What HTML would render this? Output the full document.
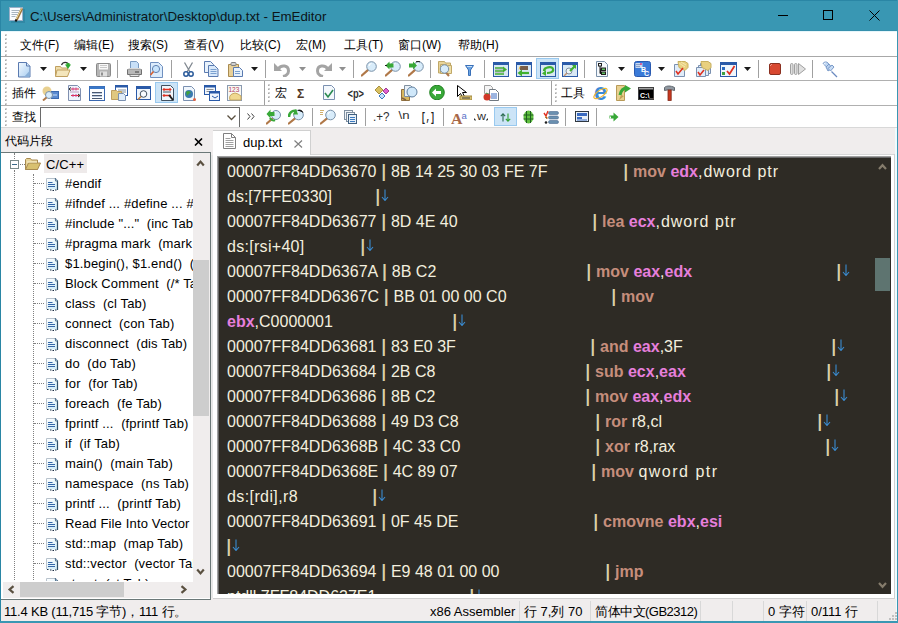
<!DOCTYPE html><html><head><meta charset="utf-8"><style>
*{box-sizing:border-box}
body{margin:0;width:898px;height:623px;overflow:hidden;position:relative;background:#f0eded;font-family:"Liberation Sans",sans-serif;font-size:12px;color:#000}
.a{position:absolute}
.t{position:absolute;white-space:pre;line-height:1}
.ed{position:absolute;white-space:pre;font-size:16px;line-height:16px;color:#f3efdf}
.k{color:#c68e7c;font-weight:bold}
.r{color:#e67fdc;font-weight:bold}
.p{color:#d8d0aa;display:inline-block;transform:scaleY(1.13);transform-origin:50% 75%;font-weight:bold;width:5.6px;text-align:center}
.ar{color:#3d8fd0}
</style></head><body>
<div class="a" style="left:0px;top:0px;width:898px;height:31px;background:#3997b3;"></div>
<div class="a" style="left:0px;top:0px;width:898px;height:1px;background:#2a86a5;"></div>
<div class="a" style="left:0px;top:30px;width:898px;height:1px;background:#3690ad;"></div>
<div class="a" style="left:0px;top:0px;width:1px;height:623px;background:#2a86a5;"></div>
<div class="a" style="left:897px;top:0px;width:1px;height:623px;background:#3997b3;"></div>
<div class="a" style="left:0px;top:621px;width:898px;height:2px;background:#3997b3;"></div>
<svg class="a" style="left:9px;top:7px" width="18" height="18" viewBox="0 0 18 18"><rect x="2" y="2" width="14" height="14" fill="#2a7a98" opacity="0.5"/><rect x="0.5" y="0.5" width="13" height="13" fill="#f8fbff" stroke="#9ab0c8"/><path d="M2.5 3.5h8M2.5 5.5h7M2.5 7.5h6M2.5 9.5h4" stroke="#a8b4c0"/><path d="M13 1.5L7.5 13" stroke="#a07840" stroke-width="2.6"/><path d="M12.5 1.5L7 12.5" stroke="#f0e0a0" stroke-width="0.9"/><path d="M7.5 12.5L6.5 14.5" stroke="#101010" stroke-width="2"/></svg>
<div class="t" style="left:30px;top:10px;font-size:13.3px;color:#0c1418">C:\Users\Administrator\Desktop\dup.txt - EmEditor</div>
<div class="a" style="left:778px;top:15px;width:10px;height:1px;background:#000;"></div>
<div class="a" style="left:823px;top:10px;width:10px;height:10px;border:1px solid #000"></div>
<svg class="a" style="left:869px;top:10px" width="11" height="11" viewBox="0 0 11 11"><path d="M0.5 0.5L10.5 10.5M10.5 0.5L0.5 10.5" stroke="#000" stroke-width="1"/></svg>
<div class="a" style="left:1px;top:31px;width:896px;height:25px;background:#fff;"></div>
<div class="a" style="left:1px;top:31px;width:896px;height:1px;background:#e6f6fb;"></div>
<div class="a" style="left:1px;top:56px;width:896px;height:1px;background:#a8a8a8;"></div>
<div class="a" style="left:1px;top:57px;width:896px;height:23px;background:#fff;"></div>
<div class="a" style="left:1px;top:80px;width:896px;height:1px;background:#b0b0b0;"></div>
<div class="a" style="left:1px;top:81px;width:896px;height:24px;background:#fff;"></div>
<div class="a" style="left:1px;top:105px;width:896px;height:1px;background:#b0b0b0;"></div>
<div class="a" style="left:1px;top:106px;width:896px;height:21px;background:#fff;"></div>
<div class="a" style="left:1px;top:127px;width:896px;height:1px;background:#d8d8d8;"></div>
<div class="a" style="left:5px;top:34px;width:2px;height:2px;background:#d0d0d0;"></div>
<div class="a" style="left:5px;top:35px;width:1px;height:1px;background:#a8a8a8;"></div>
<div class="a" style="left:5px;top:38px;width:2px;height:2px;background:#d0d0d0;"></div>
<div class="a" style="left:5px;top:39px;width:1px;height:1px;background:#a8a8a8;"></div>
<div class="a" style="left:5px;top:42px;width:2px;height:2px;background:#d0d0d0;"></div>
<div class="a" style="left:5px;top:43px;width:1px;height:1px;background:#a8a8a8;"></div>
<div class="a" style="left:5px;top:46px;width:2px;height:2px;background:#d0d0d0;"></div>
<div class="a" style="left:5px;top:47px;width:1px;height:1px;background:#a8a8a8;"></div>
<div class="a" style="left:5px;top:50px;width:2px;height:2px;background:#d0d0d0;"></div>
<div class="a" style="left:5px;top:51px;width:1px;height:1px;background:#a8a8a8;"></div>
<div class="a" style="left:5px;top:54px;width:2px;height:2px;background:#d0d0d0;"></div>
<div class="a" style="left:5px;top:55px;width:1px;height:1px;background:#a8a8a8;"></div>
<div class="a" style="left:5px;top:59px;width:2px;height:2px;background:#d0d0d0;"></div>
<div class="a" style="left:5px;top:60px;width:1px;height:1px;background:#a8a8a8;"></div>
<div class="a" style="left:5px;top:63px;width:2px;height:2px;background:#d0d0d0;"></div>
<div class="a" style="left:5px;top:64px;width:1px;height:1px;background:#a8a8a8;"></div>
<div class="a" style="left:5px;top:67px;width:2px;height:2px;background:#d0d0d0;"></div>
<div class="a" style="left:5px;top:68px;width:1px;height:1px;background:#a8a8a8;"></div>
<div class="a" style="left:5px;top:71px;width:2px;height:2px;background:#d0d0d0;"></div>
<div class="a" style="left:5px;top:72px;width:1px;height:1px;background:#a8a8a8;"></div>
<div class="a" style="left:5px;top:75px;width:2px;height:2px;background:#d0d0d0;"></div>
<div class="a" style="left:5px;top:76px;width:1px;height:1px;background:#a8a8a8;"></div>
<div class="a" style="left:5px;top:83px;width:2px;height:2px;background:#d0d0d0;"></div>
<div class="a" style="left:5px;top:84px;width:1px;height:1px;background:#a8a8a8;"></div>
<div class="a" style="left:5px;top:87px;width:2px;height:2px;background:#d0d0d0;"></div>
<div class="a" style="left:5px;top:88px;width:1px;height:1px;background:#a8a8a8;"></div>
<div class="a" style="left:5px;top:91px;width:2px;height:2px;background:#d0d0d0;"></div>
<div class="a" style="left:5px;top:92px;width:1px;height:1px;background:#a8a8a8;"></div>
<div class="a" style="left:5px;top:95px;width:2px;height:2px;background:#d0d0d0;"></div>
<div class="a" style="left:5px;top:96px;width:1px;height:1px;background:#a8a8a8;"></div>
<div class="a" style="left:5px;top:99px;width:2px;height:2px;background:#d0d0d0;"></div>
<div class="a" style="left:5px;top:100px;width:1px;height:1px;background:#a8a8a8;"></div>
<div class="a" style="left:5px;top:103px;width:2px;height:2px;background:#d0d0d0;"></div>
<div class="a" style="left:5px;top:104px;width:1px;height:1px;background:#a8a8a8;"></div>
<div class="a" style="left:5px;top:108px;width:2px;height:2px;background:#d0d0d0;"></div>
<div class="a" style="left:5px;top:109px;width:1px;height:1px;background:#a8a8a8;"></div>
<div class="a" style="left:5px;top:112px;width:2px;height:2px;background:#d0d0d0;"></div>
<div class="a" style="left:5px;top:113px;width:1px;height:1px;background:#a8a8a8;"></div>
<div class="a" style="left:5px;top:116px;width:2px;height:2px;background:#d0d0d0;"></div>
<div class="a" style="left:5px;top:117px;width:1px;height:1px;background:#a8a8a8;"></div>
<div class="a" style="left:5px;top:120px;width:2px;height:2px;background:#d0d0d0;"></div>
<div class="a" style="left:5px;top:121px;width:1px;height:1px;background:#a8a8a8;"></div>
<div class="a" style="left:5px;top:124px;width:2px;height:2px;background:#d0d0d0;"></div>
<div class="a" style="left:5px;top:125px;width:1px;height:1px;background:#a8a8a8;"></div>
<div class="t" style="left:20px;top:39px;">文件(F)</div>
<div class="t" style="left:74px;top:39px;">编辑(E)</div>
<div class="t" style="left:128px;top:39px;">搜索(S)</div>
<div class="t" style="left:184px;top:39px;">查看(V)</div>
<div class="t" style="left:240px;top:39px;">比较(C)</div>
<div class="t" style="left:296px;top:39px;">宏(M)</div>
<div class="t" style="left:344px;top:39px;">工具(T)</div>
<div class="t" style="left:398px;top:39px;">窗口(W)</div>
<div class="t" style="left:458px;top:39px;">帮助(H)</div>
<svg class="a" style="left:18px;top:62px" width="13" height="16" viewBox="0 0 13 16"><defs><linearGradient id="gnew" x1="0" y1="0" x2="1" y2="1"><stop offset="0" stop-color="#f4faff"/><stop offset="1" stop-color="#a8cdf0"/></linearGradient></defs><path d="M0.5 0.5h8l3.5 3.5v11h-11.5z" fill="url(#gnew)" stroke="#5a7ab0"/><path d="M8.5 0.5v3.5h3.5" fill="#d8e8f8" stroke="#5a7ab0"/><path d="M11.5 9L6 15h5.5z" fill="#8ab0d8"/></svg>
<svg class="a" style="left:55px;top:61px" width="16" height="16" viewBox="0 0 16 16"><path d="M0.5 5.5h5l1 1.5h6v8h-12z" fill="#eedcaa" stroke="#c0a060"/><path d="M2 9h13l-2.5 6.5h-12z" fill="#f4e6bc" stroke="#c0a060"/><path d="M6.5 4c1.5-3.5 6-3.5 7.5 0" stroke="#303030" stroke-width="1.2" fill="none"/><path d="M10 3.5h6l-3 4.5z" fill="#30a830"/><path d="M11.5 2v3h3v-3z" fill="#30a830"/></svg>
<svg class="a" style="left:96px;top:63px" width="15" height="14" viewBox="0 0 15 14"><rect x="0.5" y="0.5" width="14" height="13" rx="1" fill="#b4b4b4" stroke="#8a8a8a"/><rect x="3" y="1" width="9" height="5.5" fill="#f8f8f8"/><path d="M4 2.5h7M4 4.5h7" stroke="#c8c8c8"/><rect x="4" y="8.5" width="7" height="5" fill="#e0e0e0"/><rect x="5" y="9.5" width="2" height="3" fill="#909090"/></svg>
<svg class="a" style="left:127px;top:61px" width="15" height="16" viewBox="0 0 15 16"><path d="M3.5 0.5h6l2 2v6h-8z" fill="#c8e0f8" stroke="#7a9ac0"/><path d="M0.5 8.5h14v5h-14z" fill="#b8b8b8" stroke="#707070"/><path d="M2 7h11l1.5 1.5h-14z" fill="#d8d8d8"/><path d="M3 13.5h9v2h-9z" fill="#e8e8e8" stroke="#808080"/><path d="M8 11h4" stroke="#404040"/></svg>
<svg class="a" style="left:150px;top:62px" width="13" height="16" viewBox="0 0 13 16"><path d="M0.5 0.5h8l4 4v11h-12z" fill="#dcecfc" stroke="#7090c0"/><circle cx="6" cy="7" r="3.6" fill="#c8e4fc" stroke="#6080b0"/><path d="M3.5 9.5L0.5 13" stroke="#d86030" stroke-width="1.6"/></svg>
<svg class="a" style="left:183px;top:62px" width="11" height="15" viewBox="0 0 11 15"><path d="M1.5 0.5L7 10M9.5 0.5L4 10" stroke="#808890" stroke-width="1.3"/><circle cx="3" cy="12" r="2.2" fill="none" stroke="#2a5a9a" stroke-width="1.5"/><circle cx="8" cy="12" r="2.2" fill="none" stroke="#2a5a9a" stroke-width="1.5"/></svg>
<svg class="a" style="left:204px;top:61px" width="15" height="16" viewBox="0 0 15 16"><path d="M0.5 0.5h6l3 3v8h-9z" fill="#e8f2fc" stroke="#5a7ab0"/><path d="M4.5 4.5h6l3.5 3.5v7.5h-9.5z" fill="#d8e8fa" stroke="#5a7ab0"/><path d="M6.5 8.5h6M6.5 10.5h6M6.5 12.5h6" stroke="#7aa0d0"/></svg>
<svg class="a" style="left:228px;top:62px" width="15" height="15" viewBox="0 0 15 15"><path d="M0.5 2.5h10v12h-10z" fill="#e8d098" stroke="#a88a50"/><rect x="3" y="0.5" width="5" height="3" rx="1" fill="#d0d0d0" stroke="#808080"/><path d="M5.5 5.5h6l3 3v6h-9z" fill="#e8f2fc" stroke="#5a7ab0"/><path d="M7 9.5h5M7 11.5h5" stroke="#7aa0d0"/></svg>
<svg class="a" style="left:274px;top:62px" width="16" height="15" viewBox="0 0 16 15"><path d="M4.5 6.5c3-4 10-3.5 10 2.5c0 3-3 5-5.5 5.5" stroke="#a4a4a4" stroke-width="3" fill="none"/><path d="M0 1v8h8z" fill="#a4a4a4"/></svg>
<svg class="a" style="left:316px;top:62px" width="16" height="15" viewBox="0 0 16 15"><path d="M11.5 6.5c-3-4-10-3.5-10 2.5c0 3 3 5 5.5 5.5" stroke="#a4a4a4" stroke-width="3" fill="none"/><path d="M16 1v8h-8z" fill="#a4a4a4"/></svg>
<svg class="a" style="left:361px;top:61px" width="16" height="16" viewBox="0 0 16 16"><path d="M7.1 8.9L0.8 14.5" stroke="#b07848" stroke-width="2.2" stroke-linecap="round"/><circle cx="10.5" cy="5.5" r="4.8" fill="#d8ecfa" stroke="#7890a8" stroke-width="1"/><path d="M8.0 5.0a2.8 2.8 0 0 1 2.5 -2.5" stroke="#fff" stroke-width="1.2" fill="none"/></svg>
<svg class="a" style="left:385px;top:61px" width="16" height="16" viewBox="0 0 16 16"><path d="M7.1 8.9L0.8 14.5" stroke="#b07848" stroke-width="2.2" stroke-linecap="round"/><circle cx="10.5" cy="5.5" r="4.8" fill="#d8ecfa" stroke="#7890a8" stroke-width="1"/><path d="M8.0 5.0a2.8 2.8 0 0 1 2.5 -2.5" stroke="#fff" stroke-width="1.2" fill="none"/><path d="M0.5 4.5L4.5 0.5v2h4v4h-4v2z" fill="#38a838"/><path d="M0 4.5h2" stroke="#202020"/></svg>
<svg class="a" style="left:408px;top:61px" width="16" height="16" viewBox="0 0 16 16"><path d="M7.1 8.9L0.8 14.5" stroke="#b07848" stroke-width="2.2" stroke-linecap="round"/><circle cx="10.5" cy="5.5" r="4.8" fill="#d8ecfa" stroke="#7890a8" stroke-width="1"/><path d="M8.0 5.0a2.8 2.8 0 0 1 2.5 -2.5" stroke="#fff" stroke-width="1.2" fill="none"/><path d="M9 4.5L5 0.5v2h-4v4h4v2z" fill="#38a838"/><path d="M8 1c1-1 3-1 4 0" stroke="#202020"/></svg>
<svg class="a" style="left:438px;top:61px" width="17" height="16" viewBox="0 0 17 16"><path d="M0.5 0.5h6l1 1.5h5v10h-12z" fill="#e8d49a" stroke="#c0a868"/><path d="M2.5 3.5h6l1 1h4v8h-11z" fill="#f0e0a8" stroke="#c0a868"/><path d="M7.5 11L11 15" stroke="#b07848" stroke-width="2"/><circle cx="6.5" cy="8" r="4.2" fill="#d8ecfa" stroke="#7890a8"/></svg>
<svg class="a" style="left:465px;top:65px" width="9" height="11" viewBox="0 0 9 11"><path d="M0.5 0.5h8l-3 4.5v5.5h-2v-5.5z" fill="#6aa4e4" stroke="#3a70b8"/><path d="M2 1.5h5" stroke="#c8e0f8"/></svg>
<svg class="a" style="left:493px;top:62px" width="16" height="15" viewBox="0 0 16 15"><rect x="0.5" y="0.5" width="15" height="14" fill="#d8e8f4" stroke="#2a5aa8"/><rect x="0.5" y="0.5" width="15" height="2.5" fill="#2a5aa8"/><path d="M2 6h9M2 9h9M2 12h9" stroke="#40b030" stroke-width="1.6"/><path d="M10 4.5l4 3l-4 3z" fill="#40b030"/><path d="M2 7.2h9M2 10.2h9" stroke="#909090" stroke-width="0.6"/></svg>
<svg class="a" style="left:516px;top:62px" width="16" height="15" viewBox="0 0 16 15"><rect x="0.5" y="0.5" width="15" height="14" fill="#d8e8f4" stroke="#2a5aa8"/><rect x="0.5" y="0.5" width="15" height="2.5" fill="#2a5aa8"/><path d="M4 5h8M4 7h8" stroke="#5a3010" stroke-width="1.4"/><path d="M13 11H5" stroke="#40b030" stroke-width="2.2"/><path d="M1.5 11l4.5-3.5v7z" fill="#40b030"/><path d="M4 4.5l-1 3" stroke="#f0c040"/></svg>
<svg class="a" style="left:540px;top:62px" width="16" height="15" viewBox="0 0 16 15"><rect x="0.5" y="0.5" width="15" height="14" fill="#d8e8f4" stroke="#2a5aa8"/><rect x="0.5" y="0.5" width="15" height="2.5" fill="#2a5aa8"/><path d="M4 9c0-4 8-5 9-2c1 3-3 4-6 4" stroke="#40b030" stroke-width="2.2" fill="none"/><path d="M2 11.5l4-3.5v6z" fill="#40b030"/></svg>
<svg class="a" style="left:562px;top:62px" width="16" height="15" viewBox="0 0 16 15"><rect x="0.5" y="0.5" width="15" height="14" fill="#d8e8f4" stroke="#2a5aa8"/><rect x="0.5" y="0.5" width="15" height="2.5" fill="#2a5aa8"/><circle cx="7" cy="9" r="3" fill="#f0f4f8" stroke="#8090a0"/><path d="M5 11l-3 3" stroke="#c09070" stroke-width="1.4"/><path d="M8 9l5-5" stroke="#40b030" stroke-width="2.2"/><path d="M10 3h4v4z" fill="#40b030"/></svg>
<svg class="a" style="left:596px;top:61px" width="12" height="16" viewBox="0 0 12 16"><path d="M0.5 0.5h8l3 3v12h-11z" fill="#f4f8fc" stroke="#7a90a8"/><rect x="2.5" y="2.5" width="3" height="2.5" fill="none" stroke="#202020"/><rect x="5.5" y="7" width="4" height="2.5" fill="#60c060" stroke="#202020"/><rect x="5.5" y="11" width="4" height="2.5" fill="#60c060" stroke="#202020"/><path d="M4 5v7.5h1.5M4 8.2h1.5" stroke="#202020"/></svg>
<svg class="a" style="left:634px;top:61px" width="17" height="16" viewBox="0 0 17 16"><rect x="0.5" y="0.5" width="16" height="15" rx="2" fill="#3a7ad8" stroke="#2a5ab0"/><rect x="1.5" y="2" width="7" height="5" fill="#c8d8f0"/><path d="M2 3.5h5M2 5.5h4" stroke="#8aa0c8"/><text x="7" y="11" font-size="7" font-family="Liberation Sans" fill="#fff" font-weight="bold">B</text><text x="10" y="15" font-size="7" font-family="Liberation Sans" fill="#fff" font-weight="bold">C</text><circle cx="7" cy="3" r="1" fill="#e04080"/></svg>
<svg class="a" style="left:674px;top:61px" width="15" height="16" viewBox="0 0 15 16"><path d="M0.5 3.5h10v12h-10z" fill="#e0ecf8" stroke="#7a90b0"/><path d="M4 0.5l7 0l3 2v4l-3 3l-6-3z" fill="#e8d080" stroke="#c8b060"/><path d="M5 2l6 4M7 1l5 3" stroke="#f4e8b0"/><path d="M2 10l2 3l5-6" stroke="#e03020" stroke-width="1.6" fill="none"/></svg>
<svg class="a" style="left:696px;top:61px" width="16" height="16" viewBox="0 0 16 16"><path d="M4.5 2.5h10v10h-10z" fill="#e0ecf8" stroke="#7a90b0"/><path d="M2.5 4.5h10v10h-10z" fill="#e0ecf8" stroke="#7a90b0"/><path d="M0.5 6.5h9v9h-9z" fill="#e0ecf8" stroke="#7a90b0"/><path d="M5 0.5l7 0l3 2v4l-3 3l-6-3z" fill="#e8d080" stroke="#c8b060"/><path d="M2 11l2 3l4-5" stroke="#e03020" stroke-width="1.6" fill="none"/></svg>
<svg class="a" style="left:720px;top:62px" width="17" height="15" viewBox="0 0 17 15"><rect x="0.5" y="0.5" width="16" height="14" fill="#f0f6fc" stroke="#2a5aa8"/><rect x="0.5" y="0.5" width="16" height="2.5" fill="#2a5aa8"/><rect x="2" y="5" width="3" height="3" fill="#2a6ac0"/><rect x="2" y="10" width="3" height="3" fill="#40a040"/><path d="M7 9l2.5 3l5-8" stroke="#e03020" stroke-width="1.7" fill="none"/></svg>
<svg class="a" style="left:769px;top:63px" width="12" height="12" viewBox="0 0 12 12"><rect x="0.5" y="0.5" width="11" height="11" rx="1.5" fill="#d84830" stroke="#8a3020"/><path d="M1 3L3 1" stroke="#f0a090"/></svg>
<svg class="a" style="left:790px;top:63px" width="16" height="12" viewBox="0 0 16 12"><rect x="0.5" y="0.5" width="2.5" height="11" rx="1.2" fill="#e0e0e0" stroke="#a0a0a0"/><rect x="4.5" y="0.5" width="2.5" height="11" rx="1.2" fill="#e0e0e0" stroke="#a0a0a0"/><path d="M8.5 0.5l7 5.5l-7 5.5z" fill="#e0e0e0" stroke="#a0a0a0"/></svg>
<svg class="a" style="left:821px;top:61px" width="17" height="17" viewBox="0 0 17 17"><path d="M10.5 10.5L16 16" stroke="#6a8ac0" stroke-width="1.3"/><path d="M2 2.5c1.5-2 3.5-2 5-0.5s1.5 3.5 -0.5 5z" fill="#c0d8f4" stroke="#7a9ac8"/><path d="M5 6l3-3l3 4l-4 3z" fill="#b8d0f0" stroke="#7a9ac8"/><path d="M7 7.5l4-3.5l2 2l-3.5 4z" fill="#c8dcf4" stroke="#7a9ac8"/><path d="M2.5 3.5l2-1.5" stroke="#fff"/></svg>
<div class="a" style="left:536px;top:58px;width:23px;height:21px;background:#cce4f7;border:1px solid #99c9ef"></div>
<svg class="a" style="left:540px;top:62px" width="16" height="15" viewBox="0 0 16 15"><rect x="0.5" y="0.5" width="15" height="14" fill="#d8e8f4" stroke="#2a5aa8"/><rect x="0.5" y="0.5" width="15" height="2.5" fill="#2a5aa8"/><path d="M4 9c0-4 8-5 9-2c1 3-3 4-6 4" stroke="#40b030" stroke-width="2.2" fill="none"/><path d="M2 11.5l4-3.5v6z" fill="#40b030"/></svg>
<svg class="a" style="left:40px;top:67px" width="8" height="4" viewBox="0 0 8 4"><path d="M0 0h7l-3.5 4z" fill="#1a1a1a"/></svg>
<svg class="a" style="left:80px;top:67px" width="8" height="4" viewBox="0 0 8 4"><path d="M0 0h7l-3.5 4z" fill="#1a1a1a"/></svg>
<svg class="a" style="left:251px;top:67px" width="8" height="4" viewBox="0 0 8 4"><path d="M0 0h7l-3.5 4z" fill="#1a1a1a"/></svg>
<svg class="a" style="left:299px;top:67px" width="8" height="4" viewBox="0 0 8 4"><path d="M0 0h7l-3.5 4z" fill="#909090"/></svg>
<svg class="a" style="left:339px;top:67px" width="8" height="4" viewBox="0 0 8 4"><path d="M0 0h7l-3.5 4z" fill="#909090"/></svg>
<svg class="a" style="left:618px;top:67px" width="8" height="4" viewBox="0 0 8 4"><path d="M0 0h7l-3.5 4z" fill="#1a1a1a"/></svg>
<svg class="a" style="left:658px;top:67px" width="8" height="4" viewBox="0 0 8 4"><path d="M0 0h7l-3.5 4z" fill="#1a1a1a"/></svg>
<svg class="a" style="left:744px;top:67px" width="8" height="4" viewBox="0 0 8 4"><path d="M0 0h7l-3.5 4z" fill="#1a1a1a"/></svg>
<div class="a" style="left:117px;top:60px;width:1px;height:18px;background:#a0a0a0;"></div>
<div class="a" style="left:171px;top:60px;width:1px;height:18px;background:#a0a0a0;"></div>
<div class="a" style="left:265px;top:60px;width:1px;height:18px;background:#a0a0a0;"></div>
<div class="a" style="left:353px;top:60px;width:1px;height:18px;background:#a0a0a0;"></div>
<div class="a" style="left:430px;top:60px;width:1px;height:18px;background:#a0a0a0;"></div>
<div class="a" style="left:484px;top:60px;width:1px;height:18px;background:#a0a0a0;"></div>
<div class="a" style="left:584px;top:60px;width:1px;height:18px;background:#a0a0a0;"></div>
<div class="a" style="left:758px;top:60px;width:1px;height:18px;background:#a0a0a0;"></div>
<div class="a" style="left:812px;top:60px;width:1px;height:18px;background:#a0a0a0;"></div>
<div class="t" style="left:12px;top:87px;">插件</div>
<div class="a" style="left:155px;top:82px;width:23px;height:21px;background:#cce4f7;border:1px solid #99c9ef"></div>
<svg class="a" style="left:42px;top:86px" width="17" height="15" viewBox="0 0 17 15"><circle cx="5" cy="5" r="4.5" fill="#e8d090"/><rect x="9.5" y="5.5" width="7" height="7" fill="#5a8ad0" stroke="#3a6ab0"/><path d="M11 9h4" stroke="#c8e0f8"/><circle cx="7" cy="9" r="3.5" fill="#d8ecfa" stroke="#7890a8"/><path d="M4.5 11.5L1 14.5" stroke="#b07848" stroke-width="2"/></svg>
<svg class="a" style="left:68px;top:85px" width="13" height="16" viewBox="0 0 13 16"><path d="M0.5 0.5h9l3 3v12h-12z" fill="#eef4fc" stroke="#8090b0"/><path d="M3 4h8M3 10.5h8" stroke="#e03040" stroke-width="1"/><path d="M5 2.5v3M8 2.5v3M5 9v3M8 9v3" stroke="#d040a0" stroke-width="1"/><path d="M3 2.5L1 4l2 1.5" stroke="#202020" fill="none"/><path d="M10 9l2 1.5l-2 1.5" stroke="#202020" fill="none"/><path d="M2 7h9" stroke="#c0a0c0"/></svg>
<svg class="a" style="left:89px;top:86px" width="16" height="15" viewBox="0 0 16 15"><rect x="0.5" y="0.5" width="15" height="14" fill="#fcfdff" stroke="#3a68b0"/><rect x="0.5" y="0.5" width="15" height="2.5" fill="#3a78c8"/><path d="M3 6.5h10M3 9.5h10M3 12.5h10" stroke="#4a5870" stroke-width="1"/><path d="M3 7.5h10M3 10.5h10" stroke="#b8c8e0" stroke-width="1"/></svg>
<svg class="a" style="left:111px;top:85px" width="17" height="16" viewBox="0 0 17 16"><rect x="4.5" y="0.5" width="12" height="10" fill="#fff" stroke="#2a5aa8"/><rect x="4.5" y="0.5" width="12" height="2" fill="#2a5aa8"/><path d="M7 5h8M7 7h8" stroke="#8090a0"/><path d="M0.5 5.5h5l1 1h4v8h-10z" fill="#e0c880" stroke="#c0a060"/><path d="M7.5 8.5h5l2 2v5h-7z" fill="#e0ecf8" stroke="#7a90b0"/></svg>
<svg class="a" style="left:136px;top:86px" width="15" height="14" viewBox="0 0 15 14"><rect x="0.5" y="0.5" width="14" height="13" fill="#f0f6fc" stroke="#2a5aa8"/><rect x="0.5" y="0.5" width="14" height="2.5" fill="#2a5aa8"/><circle cx="7.5" cy="8" r="3.3" fill="#f8fcff" stroke="#405060"/><path d="M5 10.5L2 13.5" stroke="#c08040" stroke-width="1.6"/></svg>
<svg class="a" style="left:161px;top:85px" width="13" height="16" viewBox="0 0 13 16"><path d="M0.5 0.5h9l3 3v12h-12z" fill="#f0f6fc" stroke="#405060"/><path d="M2 4.5h8M2 10.5h8" stroke="#e03020" stroke-width="1.3"/><path d="M3.5 3l-1.5 1.5l1.5 1.5M8.5 3l1.5 1.5l-1.5 1.5M3.5 9l-1.5 1.5l1.5 1.5" stroke="#e03020" fill="none"/><path d="M2 7h8" stroke="#405060"/><path d="M8 10l4 5" stroke="#202020" stroke-width="2"/></svg>
<svg class="a" style="left:183px;top:86px" width="14" height="15" viewBox="0 0 14 15"><path d="M0.5 0.5h8l3 3v11h-11z" fill="#f0f6fc" stroke="#7a90b0"/><circle cx="6" cy="8" r="4" fill="#3a7ab0"/><path d="M3 6c2-2 4-1 5 1c-2 0-3 2-4 3z" fill="#40a040"/><circle cx="11.5" cy="13.5" r="1.5" fill="#e06040"/></svg>
<svg class="a" style="left:204px;top:85px" width="16" height="16" viewBox="0 0 16 16"><rect x="0.5" y="0.5" width="11" height="9" fill="#f0f6fc" stroke="#2a5aa8"/><rect x="0.5" y="0.5" width="11" height="2" fill="#2a5aa8"/><path d="M2.5 4.5h7M2.5 6.5h7" stroke="#909090"/><rect x="5.5" y="6.5" width="10" height="9" fill="#f0f6fc" stroke="#2a5aa8"/><rect x="5.5" y="6.5" width="10" height="2" fill="#2a5aa8"/><path d="M8 11l3 2l3-2" stroke="#2a5aa8" fill="none"/></svg>
<svg class="a" style="left:227px;top:85px" width="15" height="16" viewBox="0 0 15 16"><rect x="0.5" y="0.5" width="14" height="15" fill="#f8f8f4" stroke="#8a9ab0"/><text x="1.5" y="6.5" font-size="6.5" font-family="Liberation Sans" fill="#b04060">123</text><path d="M3 15c-1-3 0-5 2-6l3-1l3 1l3 2v4z" fill="#f0d890" stroke="#c8a860"/></svg>
<svg class="a" style="left:323px;top:85px" width="12" height="15" viewBox="0 0 12 15"><path d="M0.5 0.5h8l3 3v11h-11z" fill="#f4f8fc" stroke="#7a90b0"/><path d="M2 8l3 4l5-7" stroke="#2a8a50" stroke-width="1.6" fill="none"/></svg>
<svg class="a" style="left:375px;top:86px" width="15" height="14" viewBox="0 0 15 14"><path d="M0 4l4-4l4 4l-4 4z" fill="#d8c060" stroke="#a89040"/><path d="M8 5l3-3l3 3l-3 3z" fill="#e060d0" stroke="#a04090"/><path d="M4 10l3-3l3 3l-3 3z" fill="#c8e0f8" stroke="#3a7ac0"/></svg>
<svg class="a" style="left:401px;top:85px" width="17" height="16" viewBox="0 0 17 16"><path d="M0.5 4.5h4l1 1h3v10h-8z" fill="#d8b860" stroke="#907040"/><path d="M3.5 0.5h6l2 2v9h-8z" fill="#e8f0f8" stroke="#8090a0"/><circle cx="11" cy="7" r="5" fill="#d0e8fa" stroke="#6080a0"/><path d="M1 13l4 2" stroke="#806040" stroke-width="1.5"/></svg>
<svg class="a" style="left:429px;top:85px" width="16" height="15" viewBox="0 0 16 15"><circle cx="8" cy="7.5" r="7.3" fill="#38a838" stroke="#208020"/><path d="M3 7.5l4-4v2.5h5v3h-5v2.5z" fill="#fff"/></svg>
<svg class="a" style="left:456px;top:85px" width="16" height="15" viewBox="0 0 16 15"><path d="M1.5 0.5v11l3-3l2 4l2-1l-2-4h4z" fill="#fff" stroke="#000"/><rect x="4" y="11" width="12" height="4" fill="#d8c070" stroke="#a08840"/><path d="M6 13h8" stroke="#404040"/></svg>
<svg class="a" style="left:483px;top:85px" width="16" height="16" viewBox="0 0 16 16"><path d="M1.5 0.5h6l2 2v6h-8z" fill="#f4f4f4" stroke="#a0a0a0"/><path d="M6.5 4.5h6l3 3v8h-9z" fill="#fff" stroke="#707880"/><path d="M8 9h6M8 11h6M8 13h6" stroke="#3a6ac0"/><circle cx="4" cy="12" r="3.5" fill="#d03828"/><path d="M3 8l2 1" stroke="#40a040"/></svg>
<svg class="a" style="left:592px;top:85px" width="17" height="16" viewBox="0 0 17 16"><text x="2" y="15" font-size="23" font-family="Liberation Sans" font-weight="bold" fill="#3a8ad8" textLength="13" lengthAdjust="spacingAndGlyphs">e</text><ellipse cx="8.5" cy="8.5" rx="7.8" ry="3.2" transform="rotate(-35 8.5 8.5)" fill="none" stroke="#f0b830" stroke-width="1.2"/></svg>
<svg class="a" style="left:616px;top:85px" width="15" height="16" viewBox="0 0 15 16"><path d="M0.5 0.5h8v15h-8z" fill="#e8d090" stroke="#b89a58"/><path d="M3 15l2-5l3 1z" fill="#c0a058"/><path d="M4 10c1-5 4-7 7-7" stroke="#38a838" stroke-width="3" fill="none"/><path d="M9 0l6 3.5l-6 4z" fill="#38a838"/></svg>
<svg class="a" style="left:638px;top:87px" width="16" height="13" viewBox="0 0 16 13"><rect x="0.5" y="0.5" width="15" height="12" fill="#000" stroke="#404040"/><rect x="1" y="1" width="14" height="1.5" fill="#a0a0a0"/><text x="2" y="10.5" font-size="7" font-family="Liberation Sans" fill="#fff" font-weight="bold">C:\_</text></svg>
<svg class="a" style="left:664px;top:85px" width="11" height="16" viewBox="0 0 11 16"><path d="M0.5 2.5c2-2 6-2 10 0v3c-3-1-6-1-10 0z" fill="#9098a0" stroke="#606870"/><rect x="4" y="5" width="3.2" height="10.5" fill="#c83820" stroke="#802818" stroke-width="0.8"/></svg>
<div class="t" style="left:297px;top:88px;font-size:12px;font-weight:bold;color:#503828">Σ</div>
<svg class="a" style="left:347px;top:86px" width="18" height="16" viewBox="0 0 18 16"><text x="0.5" y="12" font-size="13" font-family="Liberation Sans" font-weight="bold" fill="#303030" textLength="16.5" lengthAdjust="spacingAndGlyphs">&lt;p&gt;</text></svg>
<div class="a" style="left:264px;top:81px;width:1px;height:24px;background:#a0a0a0;"></div>
<div class="a" style="left:268px;top:84px;width:2px;height:2px;background:#d0d0d0;"></div>
<div class="a" style="left:268px;top:85px;width:1px;height:1px;background:#a8a8a8;"></div>
<div class="a" style="left:268px;top:88px;width:2px;height:2px;background:#d0d0d0;"></div>
<div class="a" style="left:268px;top:89px;width:1px;height:1px;background:#a8a8a8;"></div>
<div class="a" style="left:268px;top:92px;width:2px;height:2px;background:#d0d0d0;"></div>
<div class="a" style="left:268px;top:93px;width:1px;height:1px;background:#a8a8a8;"></div>
<div class="a" style="left:268px;top:96px;width:2px;height:2px;background:#d0d0d0;"></div>
<div class="a" style="left:268px;top:97px;width:1px;height:1px;background:#a8a8a8;"></div>
<div class="a" style="left:268px;top:100px;width:2px;height:2px;background:#d0d0d0;"></div>
<div class="a" style="left:268px;top:101px;width:1px;height:1px;background:#a8a8a8;"></div>
<div class="a" style="left:551px;top:81px;width:1px;height:24px;background:#a0a0a0;"></div>
<div class="a" style="left:555px;top:84px;width:2px;height:2px;background:#d0d0d0;"></div>
<div class="a" style="left:555px;top:85px;width:1px;height:1px;background:#a8a8a8;"></div>
<div class="a" style="left:555px;top:88px;width:2px;height:2px;background:#d0d0d0;"></div>
<div class="a" style="left:555px;top:89px;width:1px;height:1px;background:#a8a8a8;"></div>
<div class="a" style="left:555px;top:92px;width:2px;height:2px;background:#d0d0d0;"></div>
<div class="a" style="left:555px;top:93px;width:1px;height:1px;background:#a8a8a8;"></div>
<div class="a" style="left:555px;top:96px;width:2px;height:2px;background:#d0d0d0;"></div>
<div class="a" style="left:555px;top:97px;width:1px;height:1px;background:#a8a8a8;"></div>
<div class="a" style="left:555px;top:100px;width:2px;height:2px;background:#d0d0d0;"></div>
<div class="a" style="left:555px;top:101px;width:1px;height:1px;background:#a8a8a8;"></div>
<div class="t" style="left:275px;top:87px;">宏</div>
<div class="t" style="left:561px;top:87px;">工具</div>
<div class="t" style="left:12px;top:111px;">查找</div>
<div class="a" style="left:40px;top:107px;width:200px;height:20px;background:#fff;border:1px solid #6a6a6a;border-bottom:none"></div>
<svg class="a" style="left:227px;top:115px" width="9" height="6" viewBox="0 0 9 6"><path d="M0.5 0.5L4.5 4.5L8.5 0.5" stroke="#5a5040" stroke-width="1.3" fill="none"/></svg>
<svg class="a" style="left:247px;top:113px" width="8" height="7" viewBox="0 0 8 7"><path d="M0.5 0.5L3 3.5L0.5 6.5M4.5 0.5L7 3.5L4.5 6.5" stroke="#404040" stroke-width="1" fill="none"/></svg>
<div class="a" style="left:494px;top:107px;width:23px;height:19px;background:#cce4f7;border:1px solid #99c9ef"></div>
<svg class="a" style="left:266px;top:109px" width="15" height="16" viewBox="0 0 15 16"><path d="M6.8 9.2L0.8 14.5" stroke="#b07848" stroke-width="2.2" stroke-linecap="round"/><circle cx="10" cy="6" r="4.5" fill="#d8ecfa" stroke="#7890a8" stroke-width="1"/><path d="M7.5 5.5a2.8 2.8 0 0 1 2.5 -2.5" stroke="#fff" stroke-width="1.2" fill="none"/><path d="M0.5 5l4-4.5v2.5h4v4h-4v2.5z" fill="#38a838"/><path d="M4 9c1 2 3 3 5 2" stroke="#38a838" stroke-width="2" fill="none"/></svg>
<svg class="a" style="left:288px;top:109px" width="16" height="16" viewBox="0 0 16 16"><path d="M7.1 9.4L0.8 14.5" stroke="#b07848" stroke-width="2.2" stroke-linecap="round"/><circle cx="10.5" cy="6" r="4.8" fill="#d8ecfa" stroke="#7890a8" stroke-width="1"/><path d="M8.0 5.5a2.8 2.8 0 0 1 2.5 -2.5" stroke="#fff" stroke-width="1.2" fill="none"/><path d="M1 8c0-4 3-7 7-6" stroke="#38a838" stroke-width="2.6" fill="none"/><path d="M8 -0.5l-3 6h5z" fill="#38a838"/><path d="M10 1.5c2-1 4 0 5 2" stroke="#202020" stroke-width="1"/></svg>
<svg class="a" style="left:320px;top:109px" width="16" height="16" viewBox="0 0 16 16"><path d="M7.1 9.4L0.8 14.5" stroke="#b07848" stroke-width="2.2" stroke-linecap="round"/><circle cx="10.5" cy="6" r="4.8" fill="#d8ecfa" stroke="#7890a8" stroke-width="1"/><path d="M8.0 5.5a2.8 2.8 0 0 1 2.5 -2.5" stroke="#fff" stroke-width="1.2" fill="none"/><path d="M0 1.5h4M0 3.5h3M0 5.5h3" stroke="#d0b070"/></svg>
<svg class="a" style="left:344px;top:110px" width="13" height="14" viewBox="0 0 13 14"><rect x="0.5" y="0.5" width="8" height="9" fill="#f0f4f8" stroke="#8090a0"/><rect x="2.5" y="2.5" width="8" height="9" fill="#f0f4f8" stroke="#8090a0"/><rect x="4.5" y="4.5" width="8" height="9" fill="#e8f0f8" stroke="#406080"/><path d="M6 7.5h5M6 9.5h5M6 11.5h5" stroke="#3a7ac0" stroke-width="1"/></svg>
<svg class="a" style="left:451px;top:112px" width="17" height="13" viewBox="0 0 17 13"><text x="0" y="12" font-size="15" font-family="Liberation Serif" font-weight="bold" fill="#a86848" textLength="11.5" lengthAdjust="spacingAndGlyphs">A</text><text x="10.5" y="6.5" font-size="9.5" font-family="Liberation Sans" fill="#5a70c8">a</text></svg>
<svg class="a" style="left:500px;top:113px" width="11" height="9" viewBox="0 0 11 9"><path d="M3 8.5v-7.5M0.8 3.2l2.2-2.4l2.2 2.4" stroke="#2a6a50" stroke-width="1.1" fill="none"/><path d="M8 0.5v7.5M5.8 5.8l2.2 2.4l2.2-2.4" stroke="#30a030" stroke-width="1.1" fill="none"/></svg>
<svg class="a" style="left:523px;top:110px" width="11" height="14" viewBox="0 0 11 14"><ellipse cx="5.5" cy="7" rx="5" ry="6.5" fill="#60c040"/><path d="M3.5 1v12M7.5 1v12M0.5 5h10M0.5 9h10" stroke="#206020" stroke-width="1"/></svg>
<svg class="a" style="left:543px;top:110px" width="16" height="14" viewBox="0 0 16 14"><rect x="5.5" y="1.5" width="10" height="3" rx="1.5" fill="#6a90b0" stroke="#4a6a90" stroke-width="0.6"/><rect x="5.5" y="6" width="10" height="3" rx="1.5" fill="#6a90b0" stroke="#4a6a90" stroke-width="0.6"/><rect x="5.5" y="10.5" width="10" height="3" rx="1.5" fill="#6a90b0" stroke="#4a6a90" stroke-width="0.6"/><path d="M1 3l2 3l2-5" stroke="#e03020" stroke-width="1.4" fill="none"/><circle cx="3" cy="12.5" r="1.3" fill="#202020"/><path d="M2 7h2v2" stroke="#e08020"/></svg>
<svg class="a" style="left:575px;top:111px" width="14" height="11" viewBox="0 0 14 11"><rect x="0.5" y="0.5" width="13" height="10" fill="#e8f0f8" stroke="#303840"/><rect x="2" y="2" width="10" height="3" fill="#3a6ac0"/><rect x="2" y="6" width="5" height="2" fill="#3a6ac0"/><path d="M2 9h10" stroke="#3a6ac0"/></svg>
<svg class="a" style="left:609px;top:112px" width="10" height="10" viewBox="0 0 10 10"><path d="M0.5 3.5h4v-3l5 4.5l-5 4.5v-3h-4z" fill="#38a838"/><path d="M1.5 4.5v2" stroke="#fff"/></svg>
<div class="a" style="left:312px;top:108px;width:1px;height:18px;background:#a0a0a0;"></div>
<div class="a" style="left:365px;top:108px;width:1px;height:18px;background:#a0a0a0;"></div>
<div class="a" style="left:443px;top:108px;width:1px;height:18px;background:#a0a0a0;"></div>
<div class="a" style="left:565px;top:108px;width:1px;height:18px;background:#a0a0a0;"></div>
<div class="a" style="left:596px;top:108px;width:1px;height:18px;background:#a0a0a0;"></div>
<svg class="a" style="left:372px;top:108px" width="20" height="16" viewBox="0 0 20 16"><text x="1" y="13" font-size="12" font-family="Liberation Sans" fill="#303030" textLength="16.5" lengthAdjust="spacingAndGlyphs">.+?</text></svg>
<svg class="a" style="left:398px;top:108px" width="14" height="16" viewBox="0 0 14 16"><text x="0.5" y="11.3" font-size="11.5" font-family="Liberation Sans" fill="#303030" textLength="11" lengthAdjust="spacingAndGlyphs">\n</text></svg>
<svg class="a" style="left:420px;top:108px" width="18" height="16" viewBox="0 0 18 16"><text x="1" y="12.5" font-size="12" font-family="Liberation Mono" font-weight="bold" fill="#202020" textLength="14" lengthAdjust="spacingAndGlyphs">[,]</text></svg>
<svg class="a" style="left:472px;top:109px" width="18" height="13" viewBox="0 0 18 13"><path d="M2.5 9.5v1.5h1.5M14 11h1.5v-1.5" stroke="#303030" fill="none"/><text x="5" y="11" font-size="10.5" font-family="Liberation Sans" fill="#303030" textLength="9" lengthAdjust="spacingAndGlyphs">w</text></svg>
<div class="t" style="left:5px;top:135px;">代码片段</div>
<svg class="a" style="left:194px;top:138px" width="9" height="8" viewBox="0 0 9 8"><path d="M1 0.5L8 7.5M8 0.5L1 7.5" stroke="#000" stroke-width="1.6"/></svg>
<div class="a" style="left:1px;top:152px;width:210px;height:448px;background:#fff;"></div>
<div class="a" style="left:1px;top:152px;width:210px;height:1px;background:#6b7878;"></div>
<div class="a" style="left:210px;top:152px;width:1px;height:448px;background:#6b7878;"></div>
<div class="a" style="left:1px;top:599px;width:210px;height:1px;background:#6b7878;"></div>
<div class="a" style="left:193px;top:153px;width:17px;height:428px;background:#f0eded;"></div>
<div class="a" style="left:193px;top:260px;width:16px;height:156px;background:#cdcdcd;"></div>
<svg class="a" style="left:196px;top:159px" width="9" height="8" viewBox="0 0 9 8"><path d="M1.2 6.5L4.5 2.6L7.8 6.5" stroke="#5a5040" stroke-width="2.2" fill="none"/></svg>
<svg class="a" style="left:196px;top:568px" width="9" height="8" viewBox="0 0 9 8"><path d="M1.2 1.5L4.5 5.4L7.8 1.5" stroke="#5a5040" stroke-width="2.2" fill="none"/></svg>
<div class="a" style="left:3px;top:582px;width:207px;height:16px;background:#f0eded;"></div>
<div class="a" style="left:20px;top:582px;width:104px;height:15px;background:#cdcdcd;"></div>
<svg class="a" style="left:7px;top:585px" width="8" height="9" viewBox="0 0 8 9"><path d="M6.5 1.2L2.6 4.5L6.5 7.8" stroke="#5a5040" stroke-width="2.2" fill="none"/></svg>
<svg class="a" style="left:180px;top:585px" width="8" height="9" viewBox="0 0 8 9"><path d="M1.5 1.2L5.4 4.5L1.5 7.8" stroke="#5a5040" stroke-width="2.2" fill="none"/></svg>
<div class="a" style="left:193px;top:581px;width:17px;height:17px;background:#f0eded;"></div>
<div class="a" style="left:1px;top:153px;width:192px;height:428px;overflow:hidden">
<div class="a" style="left:13px;top:0px;width:1px;height:6px;border-left:1px dotted #808080"></div>
<div class="a" style="left:13px;top:17px;width:1px;height:420px;border-left:1px dotted #808080"></div>
<div class="a" style="left:32px;top:21px;width:1px;height:420px;border-left:1px dotted #808080"></div>
<div class="a" style="left:9px;top:7px;width:9px;height:9px;border:1px solid #7a8a8a;background:#fff"></div>
<div class="a" style="left:11px;top:11px;width:5px;height:1px;background:#3a6a8a;"></div>
<div class="a" style="left:19px;top:11px;width:5px;height:1px;border-top:1px dotted #808080"></div>
<div class="a" style="left:43px;top:1px;width:43px;height:19px;background:#eeeaea;"></div>
<div class="t" style="left:45px;top:5px;font-size:13px;letter-spacing:0.15px;">C/C++</div>
<svg class="a" style="left:24px;top:5px" width="16" height="12"><path d="M0.5 1.5l1-1h4l1 1.5h6v9.5h-12z" fill="#e8d498" stroke="#a88a50"/><path d="M3.5 5h12l-3 6.5h-12z" fill="#d8c070" stroke="#a88a50"/><path d="M2 4h10" stroke="#f8f0d0"/></svg>
<div class="a" style="left:33px;top:30px;width:10px;height:1px;border-top:1px dotted #808080"></div>
<svg class="a" style="left:45px;top:24px" width="13" height="15"><defs><linearGradient id="gtd" x1="0" y1="0" x2="0.3" y2="1"><stop offset="0" stop-color="#ffffff"/><stop offset="1" stop-color="#d4eefa"/></linearGradient></defs><path d="M0.5 1.5h9l2 2v9h-11.5z" fill="url(#gtd)"/><path d="M0.5 12V1.5H9" stroke="#b8c2cc" fill="none"/><path d="M9 1.5l2.5 2.5v9" stroke="#2e4e68" stroke-width="1.2" fill="none"/><path d="M9.5 1v3h2" stroke="#5a7890" fill="#c8d8f0"/><path d="M2 5.5h4.5M2 7.5h7M2 9.5h7" stroke="#3566a8"/><path d="M1 12.5h1.5M4 13h1.5M6.5 13.5h1.5M9 13h1.5" stroke="#1a2a40" stroke-width="1.2"/></svg>
<div class="t" style="left:64px;top:24px;font-size:13px;letter-spacing:0.15px;">#endif</div>
<div class="a" style="left:33px;top:50px;width:10px;height:1px;border-top:1px dotted #808080"></div>
<svg class="a" style="left:45px;top:44px" width="13" height="15"><defs><linearGradient id="gtd" x1="0" y1="0" x2="0.3" y2="1"><stop offset="0" stop-color="#ffffff"/><stop offset="1" stop-color="#d4eefa"/></linearGradient></defs><path d="M0.5 1.5h9l2 2v9h-11.5z" fill="url(#gtd)"/><path d="M0.5 12V1.5H9" stroke="#b8c2cc" fill="none"/><path d="M9 1.5l2.5 2.5v9" stroke="#2e4e68" stroke-width="1.2" fill="none"/><path d="M9.5 1v3h2" stroke="#5a7890" fill="#c8d8f0"/><path d="M2 5.5h4.5M2 7.5h7M2 9.5h7" stroke="#3566a8"/><path d="M1 12.5h1.5M4 13h1.5M6.5 13.5h1.5M9 13h1.5" stroke="#1a2a40" stroke-width="1.2"/></svg>
<div class="t" style="left:64px;top:44px;font-size:13px;letter-spacing:0.15px;">#ifndef ... #define ... #endif</div>
<div class="a" style="left:33px;top:70px;width:10px;height:1px;border-top:1px dotted #808080"></div>
<svg class="a" style="left:45px;top:64px" width="13" height="15"><defs><linearGradient id="gtd" x1="0" y1="0" x2="0.3" y2="1"><stop offset="0" stop-color="#ffffff"/><stop offset="1" stop-color="#d4eefa"/></linearGradient></defs><path d="M0.5 1.5h9l2 2v9h-11.5z" fill="url(#gtd)"/><path d="M0.5 12V1.5H9" stroke="#b8c2cc" fill="none"/><path d="M9 1.5l2.5 2.5v9" stroke="#2e4e68" stroke-width="1.2" fill="none"/><path d="M9.5 1v3h2" stroke="#5a7890" fill="#c8d8f0"/><path d="M2 5.5h4.5M2 7.5h7M2 9.5h7" stroke="#3566a8"/><path d="M1 12.5h1.5M4 13h1.5M6.5 13.5h1.5M9 13h1.5" stroke="#1a2a40" stroke-width="1.2"/></svg>
<div class="t" style="left:64px;top:64px;font-size:13px;letter-spacing:0.15px;">#include "..."  (inc Tab)</div>
<div class="a" style="left:33px;top:90px;width:10px;height:1px;border-top:1px dotted #808080"></div>
<svg class="a" style="left:45px;top:84px" width="13" height="15"><defs><linearGradient id="gtd" x1="0" y1="0" x2="0.3" y2="1"><stop offset="0" stop-color="#ffffff"/><stop offset="1" stop-color="#d4eefa"/></linearGradient></defs><path d="M0.5 1.5h9l2 2v9h-11.5z" fill="url(#gtd)"/><path d="M0.5 12V1.5H9" stroke="#b8c2cc" fill="none"/><path d="M9 1.5l2.5 2.5v9" stroke="#2e4e68" stroke-width="1.2" fill="none"/><path d="M9.5 1v3h2" stroke="#5a7890" fill="#c8d8f0"/><path d="M2 5.5h4.5M2 7.5h7M2 9.5h7" stroke="#3566a8"/><path d="M1 12.5h1.5M4 13h1.5M6.5 13.5h1.5M9 13h1.5" stroke="#1a2a40" stroke-width="1.2"/></svg>
<div class="t" style="left:64px;top:84px;font-size:13px;letter-spacing:0.15px;">#pragma mark  (mark Tab)</div>
<div class="a" style="left:33px;top:110px;width:10px;height:1px;border-top:1px dotted #808080"></div>
<svg class="a" style="left:45px;top:104px" width="13" height="15"><defs><linearGradient id="gtd" x1="0" y1="0" x2="0.3" y2="1"><stop offset="0" stop-color="#ffffff"/><stop offset="1" stop-color="#d4eefa"/></linearGradient></defs><path d="M0.5 1.5h9l2 2v9h-11.5z" fill="url(#gtd)"/><path d="M0.5 12V1.5H9" stroke="#b8c2cc" fill="none"/><path d="M9 1.5l2.5 2.5v9" stroke="#2e4e68" stroke-width="1.2" fill="none"/><path d="M9.5 1v3h2" stroke="#5a7890" fill="#c8d8f0"/><path d="M2 5.5h4.5M2 7.5h7M2 9.5h7" stroke="#3566a8"/><path d="M1 12.5h1.5M4 13h1.5M6.5 13.5h1.5M9 13h1.5" stroke="#1a2a40" stroke-width="1.2"/></svg>
<div class="t" style="left:64px;top:104px;font-size:13px;letter-spacing:0.15px;">$1.begin(), $1.end()  (beg Tab)</div>
<div class="a" style="left:33px;top:130px;width:10px;height:1px;border-top:1px dotted #808080"></div>
<svg class="a" style="left:45px;top:124px" width="13" height="15"><defs><linearGradient id="gtd" x1="0" y1="0" x2="0.3" y2="1"><stop offset="0" stop-color="#ffffff"/><stop offset="1" stop-color="#d4eefa"/></linearGradient></defs><path d="M0.5 1.5h9l2 2v9h-11.5z" fill="url(#gtd)"/><path d="M0.5 12V1.5H9" stroke="#b8c2cc" fill="none"/><path d="M9 1.5l2.5 2.5v9" stroke="#2e4e68" stroke-width="1.2" fill="none"/><path d="M9.5 1v3h2" stroke="#5a7890" fill="#c8d8f0"/><path d="M2 5.5h4.5M2 7.5h7M2 9.5h7" stroke="#3566a8"/><path d="M1 12.5h1.5M4 13h1.5M6.5 13.5h1.5M9 13h1.5" stroke="#1a2a40" stroke-width="1.2"/></svg>
<div class="t" style="left:64px;top:124px;font-size:13px;letter-spacing:0.15px;">Block Comment  (/* Tab)</div>
<div class="a" style="left:33px;top:150px;width:10px;height:1px;border-top:1px dotted #808080"></div>
<svg class="a" style="left:45px;top:144px" width="13" height="15"><defs><linearGradient id="gtd" x1="0" y1="0" x2="0.3" y2="1"><stop offset="0" stop-color="#ffffff"/><stop offset="1" stop-color="#d4eefa"/></linearGradient></defs><path d="M0.5 1.5h9l2 2v9h-11.5z" fill="url(#gtd)"/><path d="M0.5 12V1.5H9" stroke="#b8c2cc" fill="none"/><path d="M9 1.5l2.5 2.5v9" stroke="#2e4e68" stroke-width="1.2" fill="none"/><path d="M9.5 1v3h2" stroke="#5a7890" fill="#c8d8f0"/><path d="M2 5.5h4.5M2 7.5h7M2 9.5h7" stroke="#3566a8"/><path d="M1 12.5h1.5M4 13h1.5M6.5 13.5h1.5M9 13h1.5" stroke="#1a2a40" stroke-width="1.2"/></svg>
<div class="t" style="left:64px;top:144px;font-size:13px;letter-spacing:0.15px;">class  (cl Tab)</div>
<div class="a" style="left:33px;top:170px;width:10px;height:1px;border-top:1px dotted #808080"></div>
<svg class="a" style="left:45px;top:164px" width="13" height="15"><defs><linearGradient id="gtd" x1="0" y1="0" x2="0.3" y2="1"><stop offset="0" stop-color="#ffffff"/><stop offset="1" stop-color="#d4eefa"/></linearGradient></defs><path d="M0.5 1.5h9l2 2v9h-11.5z" fill="url(#gtd)"/><path d="M0.5 12V1.5H9" stroke="#b8c2cc" fill="none"/><path d="M9 1.5l2.5 2.5v9" stroke="#2e4e68" stroke-width="1.2" fill="none"/><path d="M9.5 1v3h2" stroke="#5a7890" fill="#c8d8f0"/><path d="M2 5.5h4.5M2 7.5h7M2 9.5h7" stroke="#3566a8"/><path d="M1 12.5h1.5M4 13h1.5M6.5 13.5h1.5M9 13h1.5" stroke="#1a2a40" stroke-width="1.2"/></svg>
<div class="t" style="left:64px;top:164px;font-size:13px;letter-spacing:0.15px;">connect  (con Tab)</div>
<div class="a" style="left:33px;top:190px;width:10px;height:1px;border-top:1px dotted #808080"></div>
<svg class="a" style="left:45px;top:184px" width="13" height="15"><defs><linearGradient id="gtd" x1="0" y1="0" x2="0.3" y2="1"><stop offset="0" stop-color="#ffffff"/><stop offset="1" stop-color="#d4eefa"/></linearGradient></defs><path d="M0.5 1.5h9l2 2v9h-11.5z" fill="url(#gtd)"/><path d="M0.5 12V1.5H9" stroke="#b8c2cc" fill="none"/><path d="M9 1.5l2.5 2.5v9" stroke="#2e4e68" stroke-width="1.2" fill="none"/><path d="M9.5 1v3h2" stroke="#5a7890" fill="#c8d8f0"/><path d="M2 5.5h4.5M2 7.5h7M2 9.5h7" stroke="#3566a8"/><path d="M1 12.5h1.5M4 13h1.5M6.5 13.5h1.5M9 13h1.5" stroke="#1a2a40" stroke-width="1.2"/></svg>
<div class="t" style="left:64px;top:184px;font-size:13px;letter-spacing:0.15px;">disconnect  (dis Tab)</div>
<div class="a" style="left:33px;top:210px;width:10px;height:1px;border-top:1px dotted #808080"></div>
<svg class="a" style="left:45px;top:204px" width="13" height="15"><defs><linearGradient id="gtd" x1="0" y1="0" x2="0.3" y2="1"><stop offset="0" stop-color="#ffffff"/><stop offset="1" stop-color="#d4eefa"/></linearGradient></defs><path d="M0.5 1.5h9l2 2v9h-11.5z" fill="url(#gtd)"/><path d="M0.5 12V1.5H9" stroke="#b8c2cc" fill="none"/><path d="M9 1.5l2.5 2.5v9" stroke="#2e4e68" stroke-width="1.2" fill="none"/><path d="M9.5 1v3h2" stroke="#5a7890" fill="#c8d8f0"/><path d="M2 5.5h4.5M2 7.5h7M2 9.5h7" stroke="#3566a8"/><path d="M1 12.5h1.5M4 13h1.5M6.5 13.5h1.5M9 13h1.5" stroke="#1a2a40" stroke-width="1.2"/></svg>
<div class="t" style="left:64px;top:204px;font-size:13px;letter-spacing:0.15px;">do  (do Tab)</div>
<div class="a" style="left:33px;top:230px;width:10px;height:1px;border-top:1px dotted #808080"></div>
<svg class="a" style="left:45px;top:224px" width="13" height="15"><defs><linearGradient id="gtd" x1="0" y1="0" x2="0.3" y2="1"><stop offset="0" stop-color="#ffffff"/><stop offset="1" stop-color="#d4eefa"/></linearGradient></defs><path d="M0.5 1.5h9l2 2v9h-11.5z" fill="url(#gtd)"/><path d="M0.5 12V1.5H9" stroke="#b8c2cc" fill="none"/><path d="M9 1.5l2.5 2.5v9" stroke="#2e4e68" stroke-width="1.2" fill="none"/><path d="M9.5 1v3h2" stroke="#5a7890" fill="#c8d8f0"/><path d="M2 5.5h4.5M2 7.5h7M2 9.5h7" stroke="#3566a8"/><path d="M1 12.5h1.5M4 13h1.5M6.5 13.5h1.5M9 13h1.5" stroke="#1a2a40" stroke-width="1.2"/></svg>
<div class="t" style="left:64px;top:224px;font-size:13px;letter-spacing:0.15px;">for  (for Tab)</div>
<div class="a" style="left:33px;top:250px;width:10px;height:1px;border-top:1px dotted #808080"></div>
<svg class="a" style="left:45px;top:244px" width="13" height="15"><defs><linearGradient id="gtd" x1="0" y1="0" x2="0.3" y2="1"><stop offset="0" stop-color="#ffffff"/><stop offset="1" stop-color="#d4eefa"/></linearGradient></defs><path d="M0.5 1.5h9l2 2v9h-11.5z" fill="url(#gtd)"/><path d="M0.5 12V1.5H9" stroke="#b8c2cc" fill="none"/><path d="M9 1.5l2.5 2.5v9" stroke="#2e4e68" stroke-width="1.2" fill="none"/><path d="M9.5 1v3h2" stroke="#5a7890" fill="#c8d8f0"/><path d="M2 5.5h4.5M2 7.5h7M2 9.5h7" stroke="#3566a8"/><path d="M1 12.5h1.5M4 13h1.5M6.5 13.5h1.5M9 13h1.5" stroke="#1a2a40" stroke-width="1.2"/></svg>
<div class="t" style="left:64px;top:244px;font-size:13px;letter-spacing:0.15px;">foreach  (fe Tab)</div>
<div class="a" style="left:33px;top:270px;width:10px;height:1px;border-top:1px dotted #808080"></div>
<svg class="a" style="left:45px;top:264px" width="13" height="15"><defs><linearGradient id="gtd" x1="0" y1="0" x2="0.3" y2="1"><stop offset="0" stop-color="#ffffff"/><stop offset="1" stop-color="#d4eefa"/></linearGradient></defs><path d="M0.5 1.5h9l2 2v9h-11.5z" fill="url(#gtd)"/><path d="M0.5 12V1.5H9" stroke="#b8c2cc" fill="none"/><path d="M9 1.5l2.5 2.5v9" stroke="#2e4e68" stroke-width="1.2" fill="none"/><path d="M9.5 1v3h2" stroke="#5a7890" fill="#c8d8f0"/><path d="M2 5.5h4.5M2 7.5h7M2 9.5h7" stroke="#3566a8"/><path d="M1 12.5h1.5M4 13h1.5M6.5 13.5h1.5M9 13h1.5" stroke="#1a2a40" stroke-width="1.2"/></svg>
<div class="t" style="left:64px;top:264px;font-size:13px;letter-spacing:0.15px;">fprintf ...  (fprintf Tab)</div>
<div class="a" style="left:33px;top:290px;width:10px;height:1px;border-top:1px dotted #808080"></div>
<svg class="a" style="left:45px;top:284px" width="13" height="15"><defs><linearGradient id="gtd" x1="0" y1="0" x2="0.3" y2="1"><stop offset="0" stop-color="#ffffff"/><stop offset="1" stop-color="#d4eefa"/></linearGradient></defs><path d="M0.5 1.5h9l2 2v9h-11.5z" fill="url(#gtd)"/><path d="M0.5 12V1.5H9" stroke="#b8c2cc" fill="none"/><path d="M9 1.5l2.5 2.5v9" stroke="#2e4e68" stroke-width="1.2" fill="none"/><path d="M9.5 1v3h2" stroke="#5a7890" fill="#c8d8f0"/><path d="M2 5.5h4.5M2 7.5h7M2 9.5h7" stroke="#3566a8"/><path d="M1 12.5h1.5M4 13h1.5M6.5 13.5h1.5M9 13h1.5" stroke="#1a2a40" stroke-width="1.2"/></svg>
<div class="t" style="left:64px;top:284px;font-size:13px;letter-spacing:0.15px;">if  (if Tab)</div>
<div class="a" style="left:33px;top:310px;width:10px;height:1px;border-top:1px dotted #808080"></div>
<svg class="a" style="left:45px;top:304px" width="13" height="15"><defs><linearGradient id="gtd" x1="0" y1="0" x2="0.3" y2="1"><stop offset="0" stop-color="#ffffff"/><stop offset="1" stop-color="#d4eefa"/></linearGradient></defs><path d="M0.5 1.5h9l2 2v9h-11.5z" fill="url(#gtd)"/><path d="M0.5 12V1.5H9" stroke="#b8c2cc" fill="none"/><path d="M9 1.5l2.5 2.5v9" stroke="#2e4e68" stroke-width="1.2" fill="none"/><path d="M9.5 1v3h2" stroke="#5a7890" fill="#c8d8f0"/><path d="M2 5.5h4.5M2 7.5h7M2 9.5h7" stroke="#3566a8"/><path d="M1 12.5h1.5M4 13h1.5M6.5 13.5h1.5M9 13h1.5" stroke="#1a2a40" stroke-width="1.2"/></svg>
<div class="t" style="left:64px;top:304px;font-size:13px;letter-spacing:0.15px;">main()  (main Tab)</div>
<div class="a" style="left:33px;top:330px;width:10px;height:1px;border-top:1px dotted #808080"></div>
<svg class="a" style="left:45px;top:324px" width="13" height="15"><defs><linearGradient id="gtd" x1="0" y1="0" x2="0.3" y2="1"><stop offset="0" stop-color="#ffffff"/><stop offset="1" stop-color="#d4eefa"/></linearGradient></defs><path d="M0.5 1.5h9l2 2v9h-11.5z" fill="url(#gtd)"/><path d="M0.5 12V1.5H9" stroke="#b8c2cc" fill="none"/><path d="M9 1.5l2.5 2.5v9" stroke="#2e4e68" stroke-width="1.2" fill="none"/><path d="M9.5 1v3h2" stroke="#5a7890" fill="#c8d8f0"/><path d="M2 5.5h4.5M2 7.5h7M2 9.5h7" stroke="#3566a8"/><path d="M1 12.5h1.5M4 13h1.5M6.5 13.5h1.5M9 13h1.5" stroke="#1a2a40" stroke-width="1.2"/></svg>
<div class="t" style="left:64px;top:324px;font-size:13px;letter-spacing:0.15px;">namespace  (ns Tab)</div>
<div class="a" style="left:33px;top:350px;width:10px;height:1px;border-top:1px dotted #808080"></div>
<svg class="a" style="left:45px;top:344px" width="13" height="15"><defs><linearGradient id="gtd" x1="0" y1="0" x2="0.3" y2="1"><stop offset="0" stop-color="#ffffff"/><stop offset="1" stop-color="#d4eefa"/></linearGradient></defs><path d="M0.5 1.5h9l2 2v9h-11.5z" fill="url(#gtd)"/><path d="M0.5 12V1.5H9" stroke="#b8c2cc" fill="none"/><path d="M9 1.5l2.5 2.5v9" stroke="#2e4e68" stroke-width="1.2" fill="none"/><path d="M9.5 1v3h2" stroke="#5a7890" fill="#c8d8f0"/><path d="M2 5.5h4.5M2 7.5h7M2 9.5h7" stroke="#3566a8"/><path d="M1 12.5h1.5M4 13h1.5M6.5 13.5h1.5M9 13h1.5" stroke="#1a2a40" stroke-width="1.2"/></svg>
<div class="t" style="left:64px;top:344px;font-size:13px;letter-spacing:0.15px;">printf ...  (printf Tab)</div>
<div class="a" style="left:33px;top:370px;width:10px;height:1px;border-top:1px dotted #808080"></div>
<svg class="a" style="left:45px;top:364px" width="13" height="15"><defs><linearGradient id="gtd" x1="0" y1="0" x2="0.3" y2="1"><stop offset="0" stop-color="#ffffff"/><stop offset="1" stop-color="#d4eefa"/></linearGradient></defs><path d="M0.5 1.5h9l2 2v9h-11.5z" fill="url(#gtd)"/><path d="M0.5 12V1.5H9" stroke="#b8c2cc" fill="none"/><path d="M9 1.5l2.5 2.5v9" stroke="#2e4e68" stroke-width="1.2" fill="none"/><path d="M9.5 1v3h2" stroke="#5a7890" fill="#c8d8f0"/><path d="M2 5.5h4.5M2 7.5h7M2 9.5h7" stroke="#3566a8"/><path d="M1 12.5h1.5M4 13h1.5M6.5 13.5h1.5M9 13h1.5" stroke="#1a2a40" stroke-width="1.2"/></svg>
<div class="t" style="left:64px;top:364px;font-size:13px;letter-spacing:0.15px;">Read File Into Vector</div>
<div class="a" style="left:33px;top:390px;width:10px;height:1px;border-top:1px dotted #808080"></div>
<svg class="a" style="left:45px;top:384px" width="13" height="15"><defs><linearGradient id="gtd" x1="0" y1="0" x2="0.3" y2="1"><stop offset="0" stop-color="#ffffff"/><stop offset="1" stop-color="#d4eefa"/></linearGradient></defs><path d="M0.5 1.5h9l2 2v9h-11.5z" fill="url(#gtd)"/><path d="M0.5 12V1.5H9" stroke="#b8c2cc" fill="none"/><path d="M9 1.5l2.5 2.5v9" stroke="#2e4e68" stroke-width="1.2" fill="none"/><path d="M9.5 1v3h2" stroke="#5a7890" fill="#c8d8f0"/><path d="M2 5.5h4.5M2 7.5h7M2 9.5h7" stroke="#3566a8"/><path d="M1 12.5h1.5M4 13h1.5M6.5 13.5h1.5M9 13h1.5" stroke="#1a2a40" stroke-width="1.2"/></svg>
<div class="t" style="left:64px;top:384px;font-size:13px;letter-spacing:0.15px;">std::map  (map Tab)</div>
<div class="a" style="left:33px;top:410px;width:10px;height:1px;border-top:1px dotted #808080"></div>
<svg class="a" style="left:45px;top:404px" width="13" height="15"><defs><linearGradient id="gtd" x1="0" y1="0" x2="0.3" y2="1"><stop offset="0" stop-color="#ffffff"/><stop offset="1" stop-color="#d4eefa"/></linearGradient></defs><path d="M0.5 1.5h9l2 2v9h-11.5z" fill="url(#gtd)"/><path d="M0.5 12V1.5H9" stroke="#b8c2cc" fill="none"/><path d="M9 1.5l2.5 2.5v9" stroke="#2e4e68" stroke-width="1.2" fill="none"/><path d="M9.5 1v3h2" stroke="#5a7890" fill="#c8d8f0"/><path d="M2 5.5h4.5M2 7.5h7M2 9.5h7" stroke="#3566a8"/><path d="M1 12.5h1.5M4 13h1.5M6.5 13.5h1.5M9 13h1.5" stroke="#1a2a40" stroke-width="1.2"/></svg>
<div class="t" style="left:64px;top:404px;font-size:13px;letter-spacing:0.15px;">std::vector  (vector Tab)</div>
<div class="a" style="left:33px;top:430px;width:10px;height:1px;border-top:1px dotted #808080"></div>
<svg class="a" style="left:45px;top:424px" width="13" height="15"><defs><linearGradient id="gtd" x1="0" y1="0" x2="0.3" y2="1"><stop offset="0" stop-color="#ffffff"/><stop offset="1" stop-color="#d4eefa"/></linearGradient></defs><path d="M0.5 1.5h9l2 2v9h-11.5z" fill="url(#gtd)"/><path d="M0.5 12V1.5H9" stroke="#b8c2cc" fill="none"/><path d="M9 1.5l2.5 2.5v9" stroke="#2e4e68" stroke-width="1.2" fill="none"/><path d="M9.5 1v3h2" stroke="#5a7890" fill="#c8d8f0"/><path d="M2 5.5h4.5M2 7.5h7M2 9.5h7" stroke="#3566a8"/><path d="M1 12.5h1.5M4 13h1.5M6.5 13.5h1.5M9 13h1.5" stroke="#1a2a40" stroke-width="1.2"/></svg>
<div class="t" style="left:64px;top:424px;font-size:13px;letter-spacing:0.15px;">struct  (st Tab)</div>
</div>
<div class="a" style="left:213px;top:130px;width:98px;height:25px;background:#fff;"></div>
<div class="a" style="left:213px;top:130px;width:98px;height:1px;background:#d0d0d0;"></div>
<div class="a" style="left:310px;top:130px;width:1px;height:25px;background:#d0d0d0;"></div>
<div class="a" style="left:311px;top:154px;width:586px;height:1px;background:#d8d8d8;"></div>
<div class="a" style="left:213px;top:155px;width:684px;height:443px;background:#fff;"></div>
<div class="a" style="left:211px;top:155px;width:2px;height:443px;background:#e8e8e8;"></div>
<div class="a" style="left:213px;top:598px;width:682px;height:1px;background:#d0d0d0;"></div>
<div class="a" style="left:894px;top:154px;width:1px;height:445px;background:#d0d0d0;"></div>
<div class="a" style="left:895px;top:128px;width:2px;height:471px;background:#eefcff;"></div>
<div class="a" style="left:896px;top:599px;width:1px;height:22px;background:#eefcff;"></div>
<svg class="a" style="left:223px;top:133px" width="13" height="16" viewBox="0 0 13 16"><path d="M0.5 0.5h8l4 4v11h-12z" fill="#fff" stroke="#808080"/><path d="M8.5 0.5v4h4" fill="none" stroke="#808080"/><path d="M2.5 5.5h5M2.5 7.5h8M2.5 9.5h8M2.5 11.5h8M2.5 13.5h8" stroke="#a0a0a0"/></svg>
<div class="t" style="left:243px;top:136px;font-size:13px">dup.txt</div>
<svg class="a" style="left:294px;top:140px" width="9" height="8" viewBox="0 0 9 8"><path d="M0.5 0.5L8 7.5M8 0.5L0.5 7.5" stroke="#808080" stroke-width="1.2"/></svg>
<div class="a" style="left:217px;top:156px;width:674px;height:438px;background:#2e2b25;"></div>
<div class="a" style="left:217px;top:156px;width:674px;height:1px;background:#a0a0a0;"></div>
<div class="a" style="left:217px;top:156px;width:1px;height:438px;background:#a0a0a0;"></div>
<div class="a" style="left:218px;top:157px;width:673px;height:1px;background:#686868;"></div>
<div class="a" style="left:218px;top:157px;width:1px;height:437px;background:#686868;"></div>
<svg class="a" style="left:878px;top:163px" width="9" height="7" viewBox="0 0 9 7"><path d="M1 6L4.5 2.2L8 6" stroke="#857c6c" stroke-width="2.2" fill="none"/></svg>
<svg class="a" style="left:878px;top:582px" width="9" height="7" viewBox="0 0 9 7"><path d="M1 1L4.5 4.8L8 1" stroke="#857c6c" stroke-width="2.2" fill="none"/></svg>
<div class="a" style="left:875px;top:258px;width:15px;height:33px;background:#5e7470;"></div>
<div class="a" style="left:219px;top:158px;width:656px;height:436px;overflow:hidden">
<div class="ed" style="left:8px;top:6px">00007FF84DD63670 <span class="p">|</span> 8B 14 25 30 03 FE 7F</div>
<div class="ed" style="left:404px;top:6px"><span class="p">|</span> <span class="k">mov</span> <span class="r">edx</span><span style="letter-spacing:1px">,dword ptr</span></div>
<div class="ed" style="left:8px;top:31px">ds:[7FFE0330]</div>
<div class="ed" style="left:156px;top:31px"><span class="p">|</span><svg width="8" height="12" style="margin-left:0px;vertical-align:1px"><path d="M4 0.5V11.5M1 8L4 11.5L7 8" stroke="#3a8ad0" stroke-width="1.1" fill="none"/></svg></div>
<div class="ed" style="left:8px;top:56px">00007FF84DD63677 <span class="p">|</span> 8D 4E 40</div>
<div class="ed" style="left:373px;top:56px"><span class="p">|</span> <span class="k">lea</span> <span class="r">ecx</span><span style="letter-spacing:1px">,dword ptr</span></div>
<div class="ed" style="left:8px;top:81px"><span style="letter-spacing:0.3px">ds:[rsi+40]</span></div>
<div class="ed" style="left:141px;top:81px"><span class="p">|</span><svg width="8" height="12" style="margin-left:0px;vertical-align:1px"><path d="M4 0.5V11.5M1 8L4 11.5L7 8" stroke="#3a8ad0" stroke-width="1.1" fill="none"/></svg></div>
<div class="ed" style="left:8px;top:106px">00007FF84DD6367A <span class="p">|</span> 8B C2</div>
<div class="ed" style="left:367px;top:106px"><span class="p">|</span> <span class="k">mov</span> <span class="r">eax</span>,<span class="r">edx</span></div>
<div class="ed" style="left:617px;top:106px"><span class="p">|</span><svg width="8" height="12" style="margin-left:0px;vertical-align:1px"><path d="M4 0.5V11.5M1 8L4 11.5L7 8" stroke="#3a8ad0" stroke-width="1.1" fill="none"/></svg></div>
<div class="ed" style="left:8px;top:131px">00007FF84DD6367C <span class="p">|</span> BB 01 00 00 C0</div>
<div class="ed" style="left:392px;top:131px"><span class="p">|</span> <span class="k">mov</span></div>
<div class="ed" style="left:8px;top:156px"><span class="r">ebx</span>,C0000001</div>
<div class="ed" style="left:233px;top:156px"><span class="p">|</span><svg width="8" height="12" style="margin-left:0px;vertical-align:1px"><path d="M4 0.5V11.5M1 8L4 11.5L7 8" stroke="#3a8ad0" stroke-width="1.1" fill="none"/></svg></div>
<div class="ed" style="left:8px;top:181px">00007FF84DD63681 <span class="p">|</span> 83 E0 3F</div>
<div class="ed" style="left:371px;top:181px"><span class="p">|</span> <span class="k">and</span> <span class="r">eax</span>,3F</div>
<div class="ed" style="left:612px;top:181px"><span class="p">|</span><svg width="8" height="12" style="margin-left:0px;vertical-align:1px"><path d="M4 0.5V11.5M1 8L4 11.5L7 8" stroke="#3a8ad0" stroke-width="1.1" fill="none"/></svg></div>
<div class="ed" style="left:8px;top:206px">00007FF84DD63684 <span class="p">|</span> 2B C8</div>
<div class="ed" style="left:366px;top:206px"><span class="p">|</span> <span class="k">sub</span> <span class="r">ecx</span>,<span class="r">eax</span></div>
<div class="ed" style="left:607px;top:206px"><span class="p">|</span><svg width="8" height="12" style="margin-left:0px;vertical-align:1px"><path d="M4 0.5V11.5M1 8L4 11.5L7 8" stroke="#3a8ad0" stroke-width="1.1" fill="none"/></svg></div>
<div class="ed" style="left:8px;top:231px">00007FF84DD63686 <span class="p">|</span> 8B C2</div>
<div class="ed" style="left:366px;top:231px"><span class="p">|</span> <span class="k">mov</span> <span class="r">eax</span>,<span class="r">edx</span></div>
<div class="ed" style="left:615px;top:231px"><span class="p">|</span><svg width="8" height="12" style="margin-left:0px;vertical-align:1px"><path d="M4 0.5V11.5M1 8L4 11.5L7 8" stroke="#3a8ad0" stroke-width="1.1" fill="none"/></svg></div>
<div class="ed" style="left:8px;top:256px">00007FF84DD63688 <span class="p">|</span> 49 D3 C8</div>
<div class="ed" style="left:376px;top:256px"><span class="p">|</span> <span class="k">ror</span> r8,cl</div>
<div class="ed" style="left:598px;top:256px"><span class="p">|</span><svg width="8" height="12" style="margin-left:0px;vertical-align:1px"><path d="M4 0.5V11.5M1 8L4 11.5L7 8" stroke="#3a8ad0" stroke-width="1.1" fill="none"/></svg></div>
<div class="ed" style="left:8px;top:281px">00007FF84DD6368B <span class="p">|</span> 4C 33 C0</div>
<div class="ed" style="left:376px;top:281px"><span class="p">|</span> <span class="k">xor</span> r8,rax</div>
<div class="ed" style="left:606px;top:281px"><span class="p">|</span><svg width="8" height="12" style="margin-left:0px;vertical-align:1px"><path d="M4 0.5V11.5M1 8L4 11.5L7 8" stroke="#3a8ad0" stroke-width="1.1" fill="none"/></svg></div>
<div class="ed" style="left:8px;top:306px">00007FF84DD6368E <span class="p">|</span> 4C 89 07</div>
<div class="ed" style="left:372px;top:306px"><span class="p">|</span> <span class="k">mov</span> <span style="letter-spacing:1.5px">qword ptr</span></div>
<div class="ed" style="left:8px;top:331px"><span style="letter-spacing:0.4px">ds:[rdi],r8</span></div>
<div class="ed" style="left:153px;top:331px"><span class="p">|</span><svg width="8" height="12" style="margin-left:0px;vertical-align:1px"><path d="M4 0.5V11.5M1 8L4 11.5L7 8" stroke="#3a8ad0" stroke-width="1.1" fill="none"/></svg></div>
<div class="ed" style="left:8px;top:356px">00007FF84DD63691 <span class="p">|</span> 0F 45 DE</div>
<div class="ed" style="left:374px;top:356px"><span class="p">|</span> <span class="k">cmovne</span> <span class="r">ebx</span>,<span class="r">esi</span></div>
<div class="ed" style="left:7px;top:381px"><span class="p">|</span><svg width="8" height="12" style="margin-left:0px;vertical-align:1px"><path d="M4 0.5V11.5M1 8L4 11.5L7 8" stroke="#3a8ad0" stroke-width="1.1" fill="none"/></svg></div>
<div class="ed" style="left:8px;top:406px">00007FF84DD63694 <span class="p">|</span> E9 48 01 00 00</div>
<div class="ed" style="left:386px;top:406px"><span class="p">|</span> <span class="k">jmp</span></div>
<div class="ed" style="left:8px;top:431px">ntdll.7FF84DD637E1</div>
<div class="ed" style="left:250px;top:431px"><span class="p">|</span><svg width="8" height="12" style="margin-left:0px;vertical-align:1px"><path d="M4 0.5V11.5M1 8L4 11.5L7 8" stroke="#3a8ad0" stroke-width="1.1" fill="none"/></svg></div>
</div>
<div class="t" style="left:4px;top:605px;font-size:13px;letter-spacing:-0.2px">11.4 KB (11,715 字节)，111 行。</div>
<div class="a" style="left:519px;top:601px;width:1px;height:20px;background:#d8d8d8;"></div>
<div class="a" style="left:590px;top:601px;width:1px;height:20px;background:#d8d8d8;"></div>
<div class="a" style="left:700px;top:601px;width:1px;height:20px;background:#d8d8d8;"></div>
<div class="a" style="left:732px;top:601px;width:1px;height:20px;background:#d8d8d8;"></div>
<div class="a" style="left:763px;top:601px;width:1px;height:20px;background:#d8d8d8;"></div>
<div class="a" style="left:806px;top:601px;width:1px;height:20px;background:#d8d8d8;"></div>
<div class="a" style="left:877px;top:601px;width:1px;height:20px;background:#d8d8d8;"></div>
<div class="t" style="left:430px;top:605px;font-size:13px">x86 Assembler</div>
<div class="t" style="left:524px;top:605px;font-size:13px">行 7,列 70</div>
<div class="t" style="left:595px;top:605px;font-size:13px;letter-spacing:-0.5px">简体中文(GB2312)</div>
<div class="t" style="left:768px;top:605px;font-size:13px">0 字符</div>
<div class="t" style="left:811px;top:605px;font-size:13px">0/111 行</div>
<div class="a" style="left:895px;top:612px;width:2px;height:2px;background:#c0c0c0;"></div>
<div class="a" style="left:892px;top:615px;width:2px;height:2px;background:#c0c0c0;"></div>
<div class="a" style="left:895px;top:615px;width:2px;height:2px;background:#c0c0c0;"></div>
<div class="a" style="left:889px;top:618px;width:2px;height:2px;background:#c0c0c0;"></div>
<div class="a" style="left:892px;top:618px;width:2px;height:2px;background:#c0c0c0;"></div>
<div class="a" style="left:895px;top:618px;width:2px;height:2px;background:#c0c0c0;"></div>
</body></html>
